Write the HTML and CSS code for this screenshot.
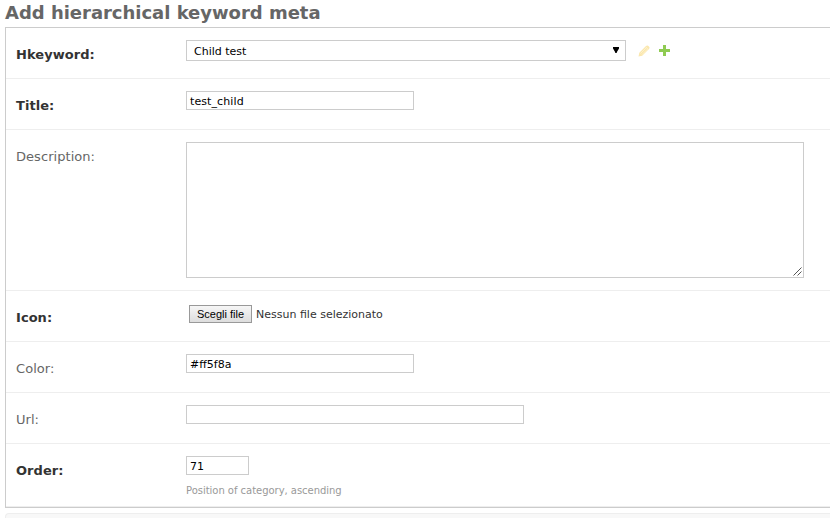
FILE: index.html
```html
<!DOCTYPE html>
<html lang="en">
<head>
<meta charset="utf-8">
<title>Add hierarchical keyword meta</title>
<link rel="stylesheet" href="styles.css">
</head>
<body>
<h1>Add hierarchical keyword meta</h1>
<form class="module">
  <div class="row">
    <label class="required">Hkeyword:</label>
    <div class="select"><span>Child test</span><svg width="6" height="6" viewBox="0 0 6 6"><path d="M0 0h6v1.5L4.2 4.5 3.6 6H2.4L1.8 4.5 0 1.5z" fill="#000"/></svg></div>
    <svg class="pencil" width="12" height="12" viewBox="0 0 12 12"><path d="M.5 11.5l.8-3.7L8 1.1Q9-.1 10.1.8l1 1q1 1-.1 2.1L4.2 10.7z" fill="#fae7ae"/><path d="M2.5 8.5l6-6M4 9.6l5.7-5.7M7.5 1.7l2.8 2.8" stroke="#fff5d7" stroke-width=".7"/></svg>
    <svg class="plus" width="11" height="11" viewBox="0 0 11 11"><path d="M4 0h3v4h4v3H7v4H4V7H0V4h4z" fill="#8fcb52"/></svg>
  </div>
  <div class="row">
    <label class="required">Title:</label>
    <div class="field"><span class="wide">test_child</span></div>
  </div>
  <div class="row description">
    <label>Description:</label>
    <div class="textarea"><svg width="9" height="9" viewBox="0 0 9 9"><path d="M.5 8.5l8-8M4.5 8.5l4-4" stroke="#555" fill="none"/></svg></div>
  </div>
  <div class="row">
    <label class="required">Icon:</label>
    <div class="file"><span class="button">Scegli file</span><span class="filename">Nessun file selezionato</span></div>
  </div>
  <div class="row">
    <label>Color:</label>
    <div class="field"><span>#ff5f8a</span></div>
  </div>
  <div class="row">
    <label>Url:</label>
    <div class="field url"></div>
  </div>
  <div class="row order">
    <label class="required">Order:</label>
    <div>
      <div class="field number"><span>71</span></div>
      <p class="help">Position of category, ascending</p>
    </div>
  </div>
</form>
<div class="submit-row"></div>
</body>
</html>
```
FILE: styles.css
```css
* { box-sizing: border-box; }
body {
  margin: 0;
  height: 518px;
  overflow: hidden;
  background: #fff;
  color: #333;
  font: 11px/14px "DejaVu Sans", Verdana, sans-serif;
}
h1 {
  margin: 0 0 0 5px;
  height: 27px;
  color: #666;
  font-size: 18px;
  line-height: 26px;
  letter-spacing: -0.02px;
  white-space: nowrap;
}
.module {
  margin-left: 5px;
  height: 481px;
  border: 1px solid #ccc;
  border-right: 0;
}
.row {
  display: flex;
  align-items: flex-start;
  height: 51px;
  padding: 12px 0 0 10px;
  border-bottom: 1px solid #eee;
}
.row.description { height: 161px; }
.row.order { height: 63px; }
label {
  flex: 0 0 170px;
  padding-top: 6px;
  color: #666;
  font-size: 13px;
  line-height: 17px;
  letter-spacing: 0.05px;
}
.required { color: #333; font-weight: bold; }
.select, .field, .textarea {
  display: flex;
  align-items: center;
  border: 1px solid #ccc;
  color: #000;
  background: #fff;
}
.select {
  width: 440px;
  height: 21px;
  padding: 0 6px 0 7px;
  justify-content: space-between;
}
.select span { padding-top: 2px; }
.select svg { margin-bottom: 2px; }
.pencil { margin: 5px 0 0 12px; }
.plus { margin: 5px 0 0 9px; }
.field { width: 228px; height: 19px; padding: 2px 0 0 3px; }
.field.url { width: 338px; }
.field.number { width: 63px; }
.wide { letter-spacing: 0.1px; }
.textarea {
  width: 618px;
  height: 136px;
  padding: 1px;
  align-items: flex-end;
  justify-content: flex-end;
}
.file { display: flex; padding: 2px 0 0 3px; }
.button {
  width: 63px;
  height: 18px;
  border: 1px solid #999;
  background: linear-gradient(#f6f6f6, #ddd);
  color: #000;
  font: 11px/16px "Liberation Sans", Arial, sans-serif;
  text-align: center;
  white-space: nowrap;
}
.filename { margin-left: 4px; line-height: 20px; white-space: nowrap; }
.help {
  margin: 9px 0 0;
  color: #999;
  font-size: 10px;
  line-height: 13px;
  letter-spacing: -0.03px;
}
.submit-row {
  height: 30px;
  margin: 5px 0 0 5px;
  border: 1px solid #eee;
  border-right: 0;
  border-radius: 4px 0 0 4px;
  background: #f8f8f8;
}
```
